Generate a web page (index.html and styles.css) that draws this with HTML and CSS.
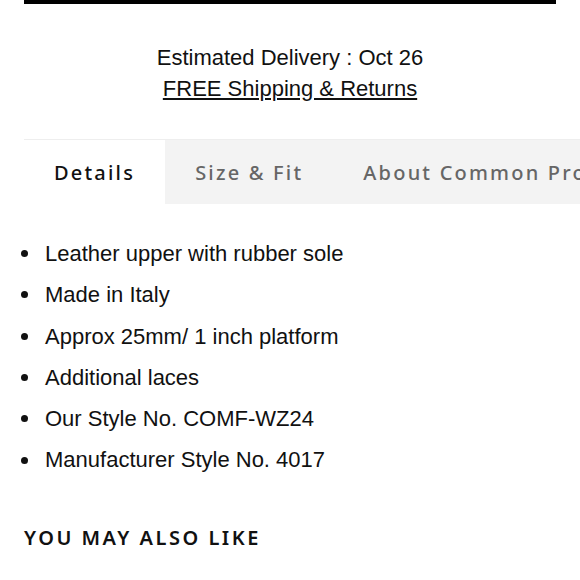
FILE: index.html
```html
<!DOCTYPE html>
<html>
<head>
<meta charset="utf-8">
<link rel="stylesheet" href="styles.css">
</head>
<body>
<div class="page">
  <div class="bar"></div>
  <div class="delivery">
    <div>Estimated Delivery : Oct 26</div>
    <a class="shipping" href="#">FREE Shipping &amp; Returns</a>
  </div>
  <nav class="tabs">
    <div class="tab active">Details</div>
    <div class="tab">Size &amp; Fit</div>
    <div class="tab">About Common Projects</div>
  </nav>
  <ul class="details">
    <li>Leather upper with rubber sole</li>
    <li>Made in Italy</li>
    <li>Approx 25mm/ 1 inch platform</li>
    <li>Additional laces</li>
    <li>Our Style No. COMF-WZ24</li>
    <li>Manufacturer Style No. 4017</li>
  </ul>
  <h2 class="also">YOU MAY ALSO LIKE</h2>
</div>
</body>
</html>
```
FILE: styles.css
```css
html, body {
  margin: 0;
  padding: 0;
  background: #fff;
}
.page {
  padding: 0 24px;
  font-family: "Liberation Sans", Arial, sans-serif;
  color: #111;
  overflow: hidden;
}
.bar {
  height: 4px;
  background: #000;
}
.delivery {
  margin-top: 37.5px;
  text-align: center;
  font-size: 22px;
  line-height: 31px;
  display: flex;
  flex-direction: column;
  align-items: center;
}
.shipping {
  color: #111;
  text-decoration: underline;
  text-underline-offset: 2px;
}
.tabs {
  margin-top: 35.5px;
  margin-right: -24px;
  border-top: 1px solid #eeeeee;
  display: flex;
  white-space: nowrap;
  overflow: hidden;
}
.tab {
  flex: none;
  height: 64px;
  display: flex;
  align-items: center;
  padding: 0 30px;
  background: #f3f3f3;
  color: #666;
  font-family: "Noto Sans", sans-serif;
  font-size: 20px;
  letter-spacing: 2.2px;
  font-weight: 500;
}
.tab.active {
  background: #fff;
  color: #111;
}
.details {
  list-style: none;
  margin: 29px 0 0;
  padding: 0;
  font-size: 22px;
  line-height: 41.3px;
}
.details li {
  display: flex;
  align-items: center;
}
.details li::before {
  content: "";
  width: 7px;
  height: 7px;
  border-radius: 50%;
  background: #111;
  margin-left: -3px;
  margin-right: 17px;
  flex: none;
}
.also {
  margin: 45px 0 0;
  font-family: "Noto Sans", sans-serif;
  font-size: 20px;
  line-height: 24px;
  letter-spacing: 2.5px;
  font-weight: 600;
}
```
